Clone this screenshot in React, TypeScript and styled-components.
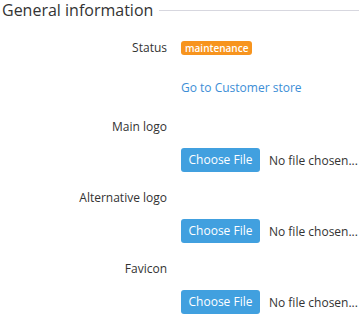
import styled, { createGlobalStyle } from "styled-components";

const GlobalStyle = createGlobalStyle`
  body {
    margin: 0;
    background: #fff;
    font-family: "Open Sans", "Segoe UI", Arial, sans-serif;
    color: #333;
  }
`;

const fileFields = ["Main logo", "Alternative logo", "Favicon"];

export default function App() {
  return (
    <>
      <GlobalStyle />
      <Section>
        <Legend>
          <LegendTitle>General information</LegendTitle>
          <LegendLine />
        </Legend>

        <Row $top={17}>
          <Label>Status</Label>
          <Value>
            <Badge>maintenance</Badge>
          </Value>
        </Row>

        <Row $top={20}>
          <Label />
          <Value>
            <StoreLink href="#">Go to Customer store</StoreLink>
          </Value>
        </Row>

        {fileFields.map((name, i) => (
          <FieldGroup key={name} $top={i === 0 ? 19 : 16}>
            <Row>
              <Label>{name}</Label>
              <Value />
            </Row>
            <Row $top={11}>
              <Label />
              <Value>
                <ChooseButton type="button">Choose File</ChooseButton>
                <NoFile>No file chosen...</NoFile>
              </Value>
            </Row>
          </FieldGroup>
        ))}
      </Section>
    </>
  );
}

const Section = styled.div`
  width: 359px;
  padding-bottom: 5px;
`;

const Legend = styled.div`
  display: flex;
  align-items: center;
  height: 21px;
`;

const LegendTitle = styled.h2`
  margin: 0 6px 0 2px;
  font-size: 16px;
  font-weight: 400;
  line-height: 21px;
  color: #333;
  white-space: nowrap;
`;

const LegendLine = styled.div`
  flex: 1;
  height: 1px;
  background: #d7d7df;
`;

const FieldGroup = styled.div<{ $top?: number }>`
  margin-top: ${(p) => p.$top ?? 0}px;
`;

const Row = styled.div<{ $top?: number }>`
  display: grid;
  grid-template-columns: 167px 1fr;
  column-gap: 14px;
  align-items: center;
  min-height: 20px;
  margin-top: ${(p) => p.$top ?? 0}px;
`;

const Label = styled.div`
  text-align: right;
  font-size: 12px;
  line-height: 20px;
  color: #333;
`;

const Value = styled.div`
  display: flex;
  align-items: center;
  gap: 9px;
  min-width: 0;
`;

const Badge = styled.span`
  display: inline-block;
  height: 14px;
  padding: 0 4px;
  border-radius: 3px;
  background: #f7941e;
  color: #fff;
  font-size: 10px;
  font-weight: 600;
  line-height: 14px;
`;

const StoreLink = styled.a`
  color: #3c8ed6;
  font-size: 12px;
  line-height: 20px;
  text-decoration: none;
`;

const ChooseButton = styled.button`
  height: 24px;
  width: 79px;
  padding: 0;
  border: none;
  border-radius: 3px;
  background: #41a0df;
  color: #fff;
  font-family: inherit;
  font-size: 12px;
  line-height: 24px;
`;

const NoFile = styled.span`
  font-size: 12px;
  color: #333;
  white-space: nowrap;
`;
